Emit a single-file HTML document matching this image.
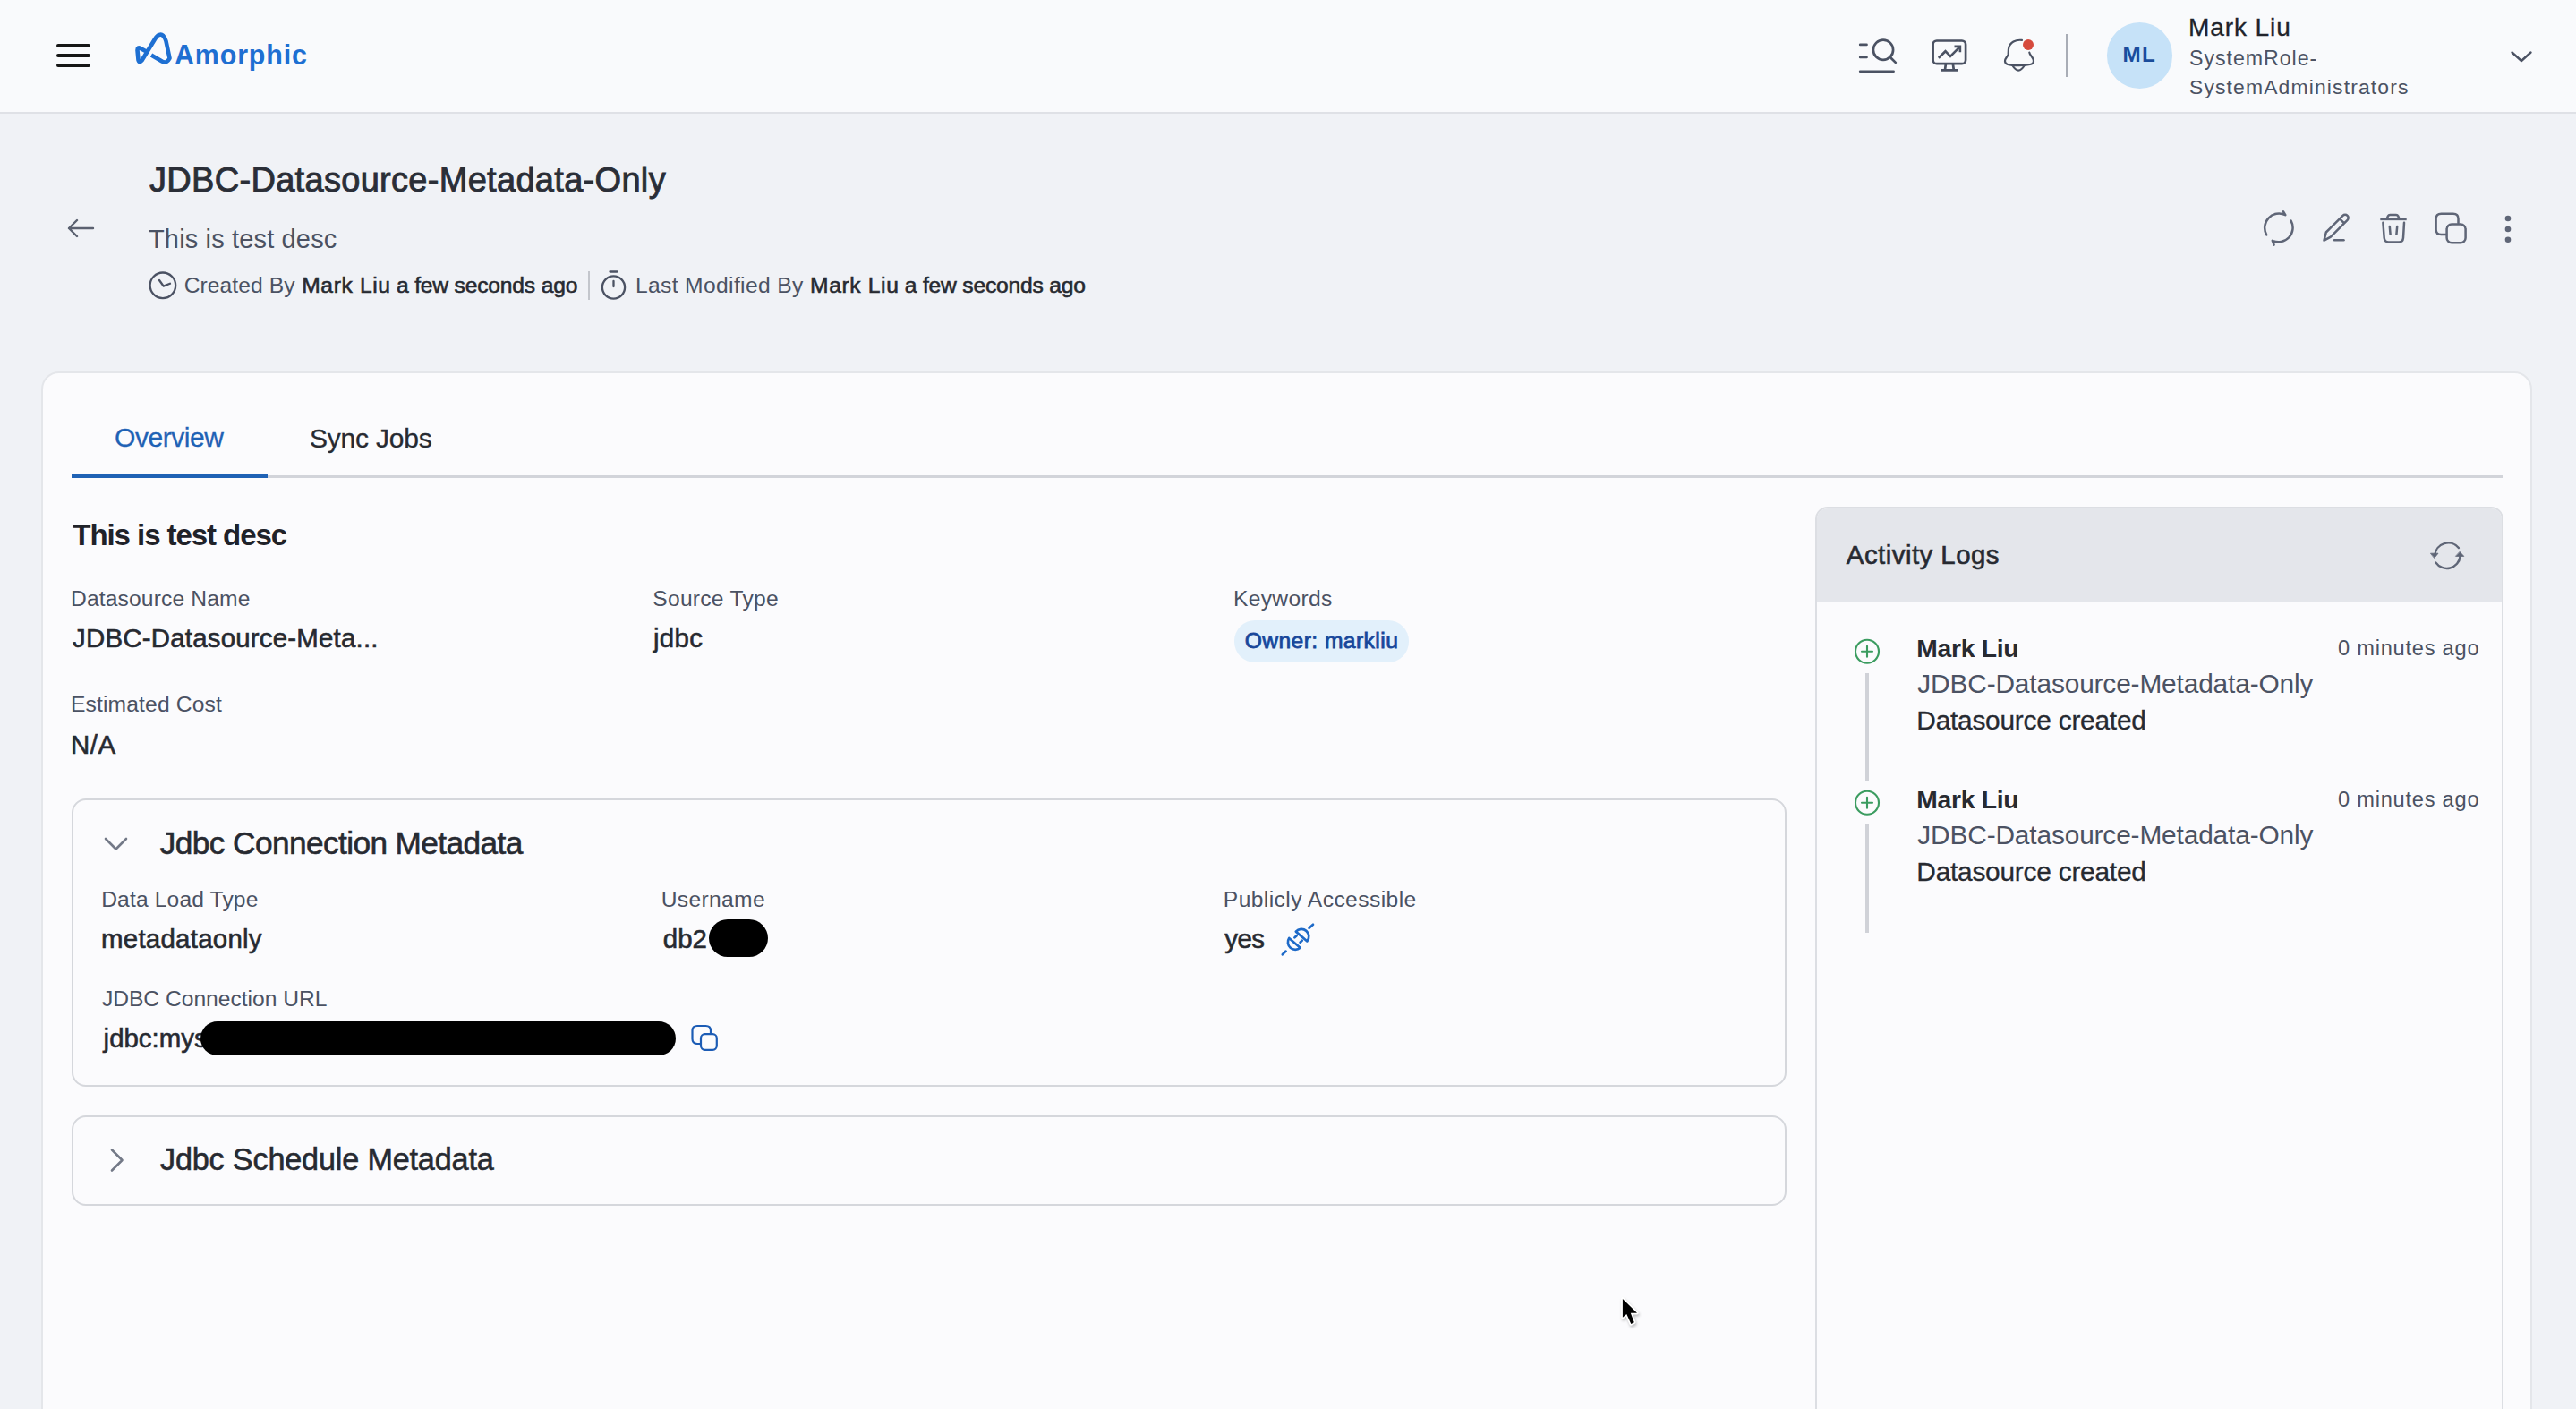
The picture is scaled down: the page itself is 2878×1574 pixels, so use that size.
<!DOCTYPE html>
<html><head><meta charset="utf-8"><title>JDBC-Datasource-Metadata-Only</title><style>
html,body{margin:0;padding:0;}
body{width:2878px;height:1574px;overflow:hidden;position:relative;background:#f0f2f6;font-family:"Liberation Sans",sans-serif;}
.t{position:absolute;white-space:nowrap;font-family:"Liberation Sans",sans-serif;}
</style></head><body>
<div style="position:absolute;left:0px;top:0px;width:2878.00px;height:125.00px;background:#f9fafc;border-bottom:2px solid #dfe1e6"></div>
<div style="position:absolute;left:62.5px;top:49px;width:38.50px;height:4.00px;background:#161616;border-radius:2px"></div>
<div style="position:absolute;left:62.5px;top:60px;width:38.50px;height:4.00px;background:#161616;border-radius:2px"></div>
<div style="position:absolute;left:62.5px;top:71px;width:38.50px;height:4.00px;background:#161616;border-radius:2px"></div>
<svg style="position:absolute;left:0;top:0" width="220" height="100"><path d="M169 61.5 L181 68.5 Q186.5 71.5 189.5 65 L185.5 46 Q182.5 37 178 39 Q175.5 39.5 173.5 43 L158.5 67.5 Q155.5 71 154.5 67 L153.5 56 Q153.5 52 157 54 L163.5 57.5" fill="none" stroke="#1e6fd2" stroke-width="4.6" stroke-linejoin="round"/></svg>
<div class="t" style="left:195.0px;top:45.6px;font-size:30.43px;line-height:30.43px;letter-spacing:0.857px;color:#1e6fd2;font-weight:700;">Amorphic</div>
<svg style="position:absolute;left:2060px;top:20px" width="240" height="80" fill="none" stroke="#4b5263" stroke-width="2.7" stroke-linecap="round" stroke-linejoin="round">
<g transform="translate(-2060,-20)">
<path d="M2078.2 49.9H2085.5M2078.2 64H2085.5M2078.2 79.75H2115.6" />
<circle cx="2104" cy="55.7" r="11.1"/>
<path d="M2112.4 64.5L2117.8 69.9"/>
<rect x="2159.6" y="45.5" width="36.5" height="25.6" rx="4.2"/>
<path d="M2168.5 78.4H2187.5M2173.9 71.5L2173 78M2181.9 71.5L2182.8 78" stroke-linecap="butt"/>
<path d="M2165.8 64.8L2173.5 57.2L2179 62.8L2189.5 52.3M2183.5 51.9H2189.9V58.3" stroke-width="2.6" stroke-linecap="butt" stroke-linejoin="miter"/>
<path d="M2259 44.9C2252 44 2245.6 47.3 2244.2 53.5C2243.5 56.5 2244 59 2243.5 61C2242.8 63.5 2240 65 2240 68.3C2240 70.3 2241.2 71.4 2243 72C2248 73.5 2263 73.7 2269 71.8C2271.5 71 2272.3 69 2271.8 67C2271 63.5 2267.8 61.5 2267.3 58.6" stroke-width="2.2"/>
<path d="M2248.3 73Q2251.8 78.6 2255.1 78.6Q2258.4 78.6 2261.8 73" stroke-width="2.2"/>
</g></svg>
<div style="position:absolute;left:2259.8px;top:44.2px;width:12px;height:12px;border-radius:50%;background:#d64a3d"></div>
<div style="position:absolute;left:2307.7px;top:38px;width:2.00px;height:48.00px;background:#a9adb6"></div>
<div style="position:absolute;left:2353.5px;top:25px;width:73.5px;height:73.5px;border-radius:50%;background:#c6e2f8"></div>
<div class="t" style="left:2371.4px;top:48.9px;font-size:24.20px;line-height:24.20px;letter-spacing:1.400px;color:#1a4c9c;font-weight:700;">ML</div>
<div class="t" style="left:2445.0px;top:17.0px;font-size:28.12px;line-height:28.12px;letter-spacing:0.857px;color:#20232b;font-weight:400;-webkit-text-stroke:0.3px #20232b;">Mark Liu</div>
<div class="t" style="left:2446.0px;top:54.0px;font-size:23.19px;line-height:23.19px;letter-spacing:0.950px;color:#4b5263;font-weight:400;">SystemRole-</div>
<div class="t" style="left:2446.0px;top:85.5px;font-size:22.90px;line-height:22.90px;letter-spacing:1.147px;color:#4b5263;font-weight:400;">SystemAdministrators</div>
<svg style="position:absolute;left:2800px;top:50px" width="36" height="26"><path d="M6.5 8.5L17 18L27.5 8.5" fill="none" stroke="#4b5263" stroke-width="2.4" stroke-linecap="round" stroke-linejoin="round"/></svg>
<svg style="position:absolute;left:0;top:0" width="1300" height="360" fill="none" stroke-linecap="round" stroke-linejoin="round">
<path d="M77 255H104M86 246L77 255L86 264" stroke="#5b6170" stroke-width="2.4"/>
<circle cx="181.9" cy="318.8" r="14.3" stroke="#4b5263" stroke-width="2.3"/>
<path d="M178 313L182.7 319.6L190 316.8" stroke="#4b5263" stroke-width="2.3"/>
<circle cx="685.5" cy="321" r="12.6" stroke="#4b5263" stroke-width="2.3"/>
<path d="M681.5 303.5H689.5M685.5 314V320" stroke="#4b5263" stroke-width="2.3"/>
</svg>
<div style="position:absolute;left:657px;top:303px;width:2.00px;height:32.00px;background:#c3c6cc"></div>
<div class="t" style="left:167.0px;top:183.3px;font-size:37.97px;line-height:37.97px;letter-spacing:0.321px;color:#2a2e37;font-weight:400;-webkit-text-stroke:0.9px #2a2e37;">JDBC-Datasource-Metadata-Only</div>
<div class="t" style="left:166.0px;top:252.5px;font-size:28.99px;line-height:28.99px;letter-spacing:0.156px;color:#4b5263;font-weight:400;">This is test desc</div>
<div class="t" style="left:205.7px;top:306.7px;font-size:24.64px;line-height:24.64px;letter-spacing:0.078px;color:#4b5263;font-weight:400;">Created By</div>
<div class="t" style="left:337.2px;top:306.7px;font-size:24.64px;line-height:24.64px;letter-spacing:0.629px;color:#272a31;font-weight:400;-webkit-text-stroke:0.6px #272a31;">Mark Liu</div>
<div class="t" style="left:443.0px;top:306.7px;font-size:24.64px;line-height:24.64px;letter-spacing:-0.188px;color:#272a31;font-weight:400;-webkit-text-stroke:0.6px #272a31;">a few seconds ago</div>
<div class="t" style="left:710.0px;top:306.7px;font-size:24.64px;line-height:24.64px;letter-spacing:0.347px;color:#4b5263;font-weight:400;">Last Modified By</div>
<div class="t" style="left:905.0px;top:306.7px;font-size:24.64px;line-height:24.64px;letter-spacing:0.629px;color:#272a31;font-weight:400;-webkit-text-stroke:0.6px #272a31;">Mark Liu</div>
<div class="t" style="left:1010.8px;top:306.7px;font-size:24.64px;line-height:24.64px;letter-spacing:-0.194px;color:#272a31;font-weight:400;-webkit-text-stroke:0.6px #272a31;">a few seconds ago</div>
<svg style="position:absolute;left:2510px;top:220px" width="320" height="70" fill="none" stroke="#5f6677" stroke-width="2.5" stroke-linecap="round" stroke-linejoin="round">
<g transform="translate(-2510,-220)">
<path d="M2532.3 262.5A16 16 0 0 1 2553.3 240.2L2550.9 236.2"/>
<path d="M2559.6 246.6A16 16 0 0 1 2538.8 268.8L2540.6 273.6"/>
<path d="M2596.5 268.6L2598.8 259.5L2617.5 240.8A3.6 3.6 0 0 1 2622.6 245.9L2603.9 264.6Z M2614 244.3L2619.1 249.4"/>
<path d="M2608 268.2H2618.5"/>
<path d="M2659.3 244.9H2688.7" stroke-linecap="butt"/><path d="M2666.6 244.6L2668 241.2Q2668.6 239.9 2670.2 239.9H2677Q2678.6 239.9 2679.2 241.2L2680.6 244.6"/>
<path d="M2662.4 248.8L2663.7 265.8Q2664.3 270.4 2668.6 270.4H2680.2Q2684.5 270.4 2685 265.8L2686 248.8"/>
<path d="M2669.8 253L2670.6 261.8M2678.2 253L2677.4 261.8"/>
<path d="M2746.5 249V244.5Q2746.5 238.8 2740.8 238.8H2727.5Q2721.6 238.8 2721.6 244.5V256.5Q2721.6 262 2727.3 262H2733"/>
<rect x="2733.6" y="250.6" width="21" height="20.6" rx="5.5"/>
</g>
<g fill="#5f6677" stroke="none"><circle cx="292" cy="24" r="3.3"/><circle cx="292" cy="36" r="3.3"/><circle cx="292" cy="47.8" r="3.3"/></g>
</svg>
<div style="position:absolute;left:46px;top:415px;width:2779px;height:1200px;background:#fbfbfd;border:2px solid #e4e6ea;border-radius:20px"></div>
<div style="position:absolute;left:80px;top:530.5px;width:2716.00px;height:3.00px;background:#d2d4da"></div>
<div style="position:absolute;left:80px;top:530px;width:219.00px;height:4.00px;background:#1f62b5"></div>
<div class="t" style="left:128.0px;top:473.5px;font-size:30.00px;line-height:30.00px;letter-spacing:-0.443px;color:#1f62b5;font-weight:400;-webkit-text-stroke:0.3px #1f62b5;">Overview</div>
<div class="t" style="left:345.9px;top:474.5px;font-size:30.00px;line-height:30.00px;letter-spacing:-0.200px;color:#272a31;font-weight:400;-webkit-text-stroke:0.3px #272a31;">Sync Jobs</div>
<div class="t" style="left:81.3px;top:581.3px;font-size:33.04px;line-height:33.04px;letter-spacing:-1.069px;color:#1f2229;font-weight:700;">This is test desc</div>
<div class="t" style="left:79.0px;top:656.6px;font-size:24.64px;line-height:24.64px;letter-spacing:0.136px;color:#4b5263;font-weight:400;">Datasource Name</div>
<div class="t" style="left:729.3px;top:656.9px;font-size:24.64px;line-height:24.64px;letter-spacing:0.250px;color:#4b5263;font-weight:400;">Source Type</div>
<div class="t" style="left:1378.0px;top:656.8px;font-size:24.64px;line-height:24.64px;letter-spacing:0.314px;color:#4b5263;font-weight:400;">Keywords</div>
<div class="t" style="left:81.0px;top:697.7px;font-size:29.42px;line-height:29.42px;letter-spacing:0.223px;color:#272a31;font-weight:400;-webkit-text-stroke:0.6px #272a31;">JDBC-Datasource-Meta...</div>
<div class="t" style="left:730.0px;top:697.7px;font-size:29.42px;line-height:29.42px;letter-spacing:0.300px;color:#272a31;font-weight:400;-webkit-text-stroke:0.6px #272a31;">jdbc</div>
<div style="position:absolute;left:1379px;top:693px;width:194.5px;height:46.5px;border-radius:23px;background:#e2f0fb"></div>
<div class="t" style="left:1390.7px;top:703.9px;font-size:24.64px;line-height:24.64px;letter-spacing:0.431px;color:#18479a;font-weight:400;-webkit-text-stroke:0.8px #18479a;">Owner: markliu</div>
<div class="t" style="left:79.0px;top:774.8px;font-size:24.64px;line-height:24.64px;letter-spacing:0.138px;color:#4b5263;font-weight:400;">Estimated Cost</div>
<div class="t" style="left:79.0px;top:817.1px;font-size:29.42px;line-height:29.42px;letter-spacing:0.600px;color:#272a31;font-weight:400;-webkit-text-stroke:0.6px #272a31;">N/A</div>
<div style="position:absolute;left:80px;top:892px;width:1912px;height:318px;border:2px solid #d5d7dc;border-radius:16px"></div>
<svg style="position:absolute;left:100px;top:920px" width="60" height="40"><path d="M18 17L29.5 28.5L41 17" fill="none" stroke="#737987" stroke-width="2.6" stroke-linecap="round" stroke-linejoin="round"/></svg>
<div class="t" style="left:178.8px;top:923.6px;font-size:35.22px;line-height:35.22px;letter-spacing:-0.583px;color:#272a31;font-weight:400;-webkit-text-stroke:0.6px #272a31;">Jdbc Connection Metadata</div>
<div class="t" style="left:113.2px;top:993.3px;font-size:24.64px;line-height:24.64px;letter-spacing:0.138px;color:#4b5263;font-weight:400;">Data Load Type</div>
<div class="t" style="left:738.7px;top:993.3px;font-size:24.64px;line-height:24.64px;letter-spacing:0.329px;color:#4b5263;font-weight:400;">Username</div>
<div class="t" style="left:1366.8px;top:993.3px;font-size:24.64px;line-height:24.64px;letter-spacing:0.411px;color:#4b5263;font-weight:400;">Publicly Accessible</div>
<div class="t" style="left:113.0px;top:1033.8px;font-size:29.42px;line-height:29.42px;letter-spacing:0.273px;color:#272a31;font-weight:400;-webkit-text-stroke:0.6px #272a31;">metadataonly</div>
<div class="t" style="left:740.8px;top:1033.8px;font-size:29.42px;line-height:29.42px;letter-spacing:0.000px;color:#272a31;font-weight:400;-webkit-text-stroke:0.6px #272a31;">db2</div>
<div style="position:absolute;left:791.5px;top:1027.3px;width:66px;height:42px;border-radius:21px;background:#000"></div>
<div class="t" style="left:1368.2px;top:1033.8px;font-size:29.42px;line-height:29.42px;letter-spacing:-0.450px;color:#272a31;font-weight:400;-webkit-text-stroke:0.6px #272a31;">yes</div>
<svg style="position:absolute;left:0;top:0;overflow:visible" width="1" height="1" fill="none" stroke="#1e6ac8" stroke-width="2.7" stroke-linecap="round" stroke-linejoin="round">
<path d="M1447.8 1040.6L1460.4 1051.4A8.3 8.3 0 0 0 1447.8 1040.6Z"/>
<path d="M1440.2 1048L1452.6 1058.8A8.3 8.3 0 0 1 1440.2 1048Z"/>
<path d="M1432.8 1066.2L1436.6 1062.6M1462.6 1036.8L1467 1032.8M1448.6 1045.2L1446.4 1047.4M1454.8 1050.6L1452.6 1052.8"/>
</svg>
<div class="t" style="left:113.9px;top:1103.8px;font-size:24.64px;line-height:24.64px;letter-spacing:-0.017px;color:#4b5263;font-weight:400;">JDBC Connection URL</div>
<div class="t" style="left:115.6px;top:1144.8px;font-size:29.42px;line-height:29.42px;letter-spacing:0.000px;color:#272a31;font-weight:400;-webkit-text-stroke:0.6px #272a31;">jdbc:mys</div>
<div style="position:absolute;left:224px;top:1140.7px;width:530.5px;height:38px;border-radius:19px;background:#000"></div>
<svg style="position:absolute;left:765px;top:1138px" width="45" height="45" fill="none" stroke="#1c5cb5" stroke-width="2.2" stroke-linecap="round" stroke-linejoin="round">
<path d="M29 16V13.5Q29 8 23.5 8H14Q8.5 8 8.5 13.5V22.5Q8.5 28 14 28H17"/>
<rect x="18" y="17.2" width="17.8" height="17.6" rx="4.5"/>
</svg>
<div style="position:absolute;left:80px;top:1246px;width:1912px;height:97px;border:2px solid #d5d7dc;border-radius:16px"></div>
<svg style="position:absolute;left:110px;top:1276px" width="40" height="40"><path d="M15 8.5L26.5 20L15 31.5" fill="none" stroke="#737987" stroke-width="2.6" stroke-linecap="round" stroke-linejoin="round"/></svg>
<div class="t" style="left:179.0px;top:1278.0px;font-size:34.20px;line-height:34.20px;letter-spacing:-0.171px;color:#272a31;font-weight:400;-webkit-text-stroke:0.6px #272a31;">Jdbc Schedule Metadata</div>
<div style="position:absolute;left:2028px;top:566px;width:765px;height:1100px;border:2px solid #dcdee3;border-radius:14px;background:#fbfbfd;overflow:hidden"><div style="height:104px;background:#e4e6eb"></div></div>
<div class="t" style="left:2062.8px;top:605.3px;font-size:29.42px;line-height:29.42px;letter-spacing:0.475px;color:#272a31;font-weight:400;-webkit-text-stroke:0.6px #272a31;">Activity Logs</div>
<svg style="position:absolute;left:0;top:0;overflow:visible" width="1" height="1" fill="none" stroke="#5f6677" stroke-width="2.4" stroke-linecap="round">
<path d="M2720.3 620A15 15 0 0 1 2746.9 612M2721.3 628.4A15 15 0 0 0 2748.6 621.5"/>
<path d="M2715.8 618.2H2724L2719.9 623.2Z M2743.8 621.4H2752.8L2748.3 616.6Z" fill="#5f6677" stroke-width="0.8" stroke-linejoin="round"/>
</svg>
<svg style="position:absolute;left:2068px;top:709px" width="36" height="36" fill="none" stroke="#3b9c60" stroke-width="2.1" stroke-linecap="round"><circle cx="18" cy="18.8" r="13"/><path d="M12 18.8H24M18 12.8V24.8"/></svg>
<div style="position:absolute;left:2084px;top:752px;width:4.00px;height:120.50px;background:#d0d2d8"></div>
<div class="t" style="left:2141.3px;top:709.5px;font-size:28.26px;line-height:28.26px;letter-spacing:-0.271px;color:#272a31;font-weight:700;">Mark Liu</div>
<div class="t" style="left:2612.0px;top:712.5px;font-size:23.62px;line-height:23.62px;letter-spacing:0.767px;color:#4b5263;font-weight:400;">0 minutes ago</div>
<div class="t" style="left:2142.3px;top:749.2px;font-size:29.86px;line-height:29.86px;letter-spacing:-0.154px;color:#4b5263;font-weight:400;">JDBC-Datasource-Metadata-Only</div>
<div class="t" style="left:2141.3px;top:789.6px;font-size:29.86px;line-height:29.86px;letter-spacing:-0.235px;color:#272a31;font-weight:400;-webkit-text-stroke:0.3px #272a31;">Datasource created</div>
<svg style="position:absolute;left:2068px;top:878px" width="36" height="36" fill="none" stroke="#3b9c60" stroke-width="2.1" stroke-linecap="round"><circle cx="18" cy="18.8" r="13"/><path d="M12 18.8H24M18 12.8V24.8"/></svg>
<div style="position:absolute;left:2084px;top:921px;width:4.00px;height:120.50px;background:#d0d2d8"></div>
<div class="t" style="left:2141.3px;top:878.5px;font-size:28.26px;line-height:28.26px;letter-spacing:-0.271px;color:#272a31;font-weight:700;">Mark Liu</div>
<div class="t" style="left:2612.0px;top:881.5px;font-size:23.62px;line-height:23.62px;letter-spacing:0.767px;color:#4b5263;font-weight:400;">0 minutes ago</div>
<div class="t" style="left:2142.3px;top:918.2px;font-size:29.86px;line-height:29.86px;letter-spacing:-0.154px;color:#4b5263;font-weight:400;">JDBC-Datasource-Metadata-Only</div>
<div class="t" style="left:2141.3px;top:958.6px;font-size:29.86px;line-height:29.86px;letter-spacing:-0.235px;color:#272a31;font-weight:400;-webkit-text-stroke:0.3px #272a31;">Datasource created</div>
<svg style="position:absolute;left:1800px;top:1440px" width="50" height="50"><path d="M12.9 10.9V31.7L17.3 28L22.3 38.9L25.8 37.2L21.8 26.8H29Z" fill="#000" stroke="#fff" stroke-width="3.5" stroke-linejoin="round" paint-order="stroke" style="filter:drop-shadow(1px 2px 1.5px rgba(0,0,0,0.25))"/></svg>
</body></html>
